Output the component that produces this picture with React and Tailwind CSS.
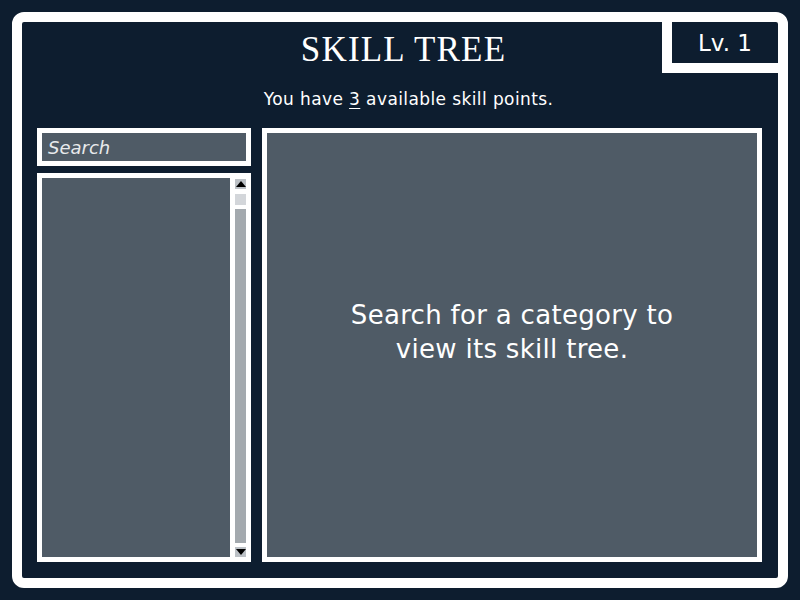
import React from "react";

const bodyFont = { fontFamily: '"DejaVu Sans", "Noto Sans", sans-serif' };

const SkillTree = () => {
  const points = 3; // 사용 가능한 스킬 포인트
  const level = 1;

  return (
    <div className="w-[800px] h-[600px] bg-[#0d1d2f] p-3" style={bodyFont}>
      <div className="relative h-full rounded-[12px] border-[10px] border-white flex flex-col pl-[15px] pr-[16px] pb-[16px]">
        {/* 레벨 표시 */}
        <div className="absolute top-0 right-0 w-[116px] h-[51px] border-l-[10px] border-b-[10px] border-white flex items-center justify-center">
          <span className="text-[23px] leading-none text-white mt-[1px]">Lv. {level}</span>
        </div>

        {/* 헤더 */}
        <div className="h-[106px] flex flex-col items-center">
          <h1
            className="mt-[8px] text-[35px] leading-[40px] text-white uppercase tracking-[1.2px] pl-[8px]"
            style={{ fontFamily: '"Liberation Serif", serif' }}
          >
            Skill Tree
          </h1>
          <p className="mt-[18px] text-[17px] leading-[22px] text-white pl-[18px] tracking-[0.4px]">
            You have <span className="underline underline-offset-[3px]">{points}</span> available skill points.
          </p>
        </div>

        <div className="flex-1 flex gap-[11px]">
          {/* 왼쪽: 검색 + 목록 */}
          <div className="w-[214px] flex flex-col gap-[7px]">
            <div className="h-[38px] border-[5px] border-white bg-[#4f5b66] flex items-center px-[6px]">
              <span className="italic text-[18px] text-[#e8eaec] mt-[1px]">Search</span>
            </div>
            <div className="flex-1 border-[5px] border-white bg-white flex gap-[5px]">
              <div className="flex-1 bg-[#4f5b66]"></div>
              <div className="w-[11px] flex flex-col pt-[1px]">
                <div className="h-[10px] bg-[#bcc1c6] flex items-center justify-center">
                  <div className="w-0 h-0 border-l-[5px] border-r-[5px] border-b-[6px] border-l-transparent border-r-transparent border-b-black"></div>
                </div>
                <div className="h-[11px] mt-[5px] bg-[#d3d6da]"></div>
                <div className="flex-1 mt-[4px] bg-[#a3a9ae]"></div>
                <div className="h-[10px] mt-[4px] bg-[#bcc1c6] flex items-center justify-center">
                  <div className="w-0 h-0 border-l-[5px] border-r-[5px] border-t-[6px] border-l-transparent border-r-transparent border-t-black"></div>
                </div>
              </div>
            </div>
          </div>

          {/* 스킬 트리 영역 */}
          <div className="flex-1 border-[5px] border-white bg-[#4f5b66] flex items-center justify-center">
            <p className="text-center text-[26px] leading-[34px] text-white mb-[26px] tracking-[0.3px]">
              Search for a category to
              <br />
              view its skill tree.
            </p>
          </div>
        </div>
      </div>
    </div>
  );
};

export default SkillTree;
